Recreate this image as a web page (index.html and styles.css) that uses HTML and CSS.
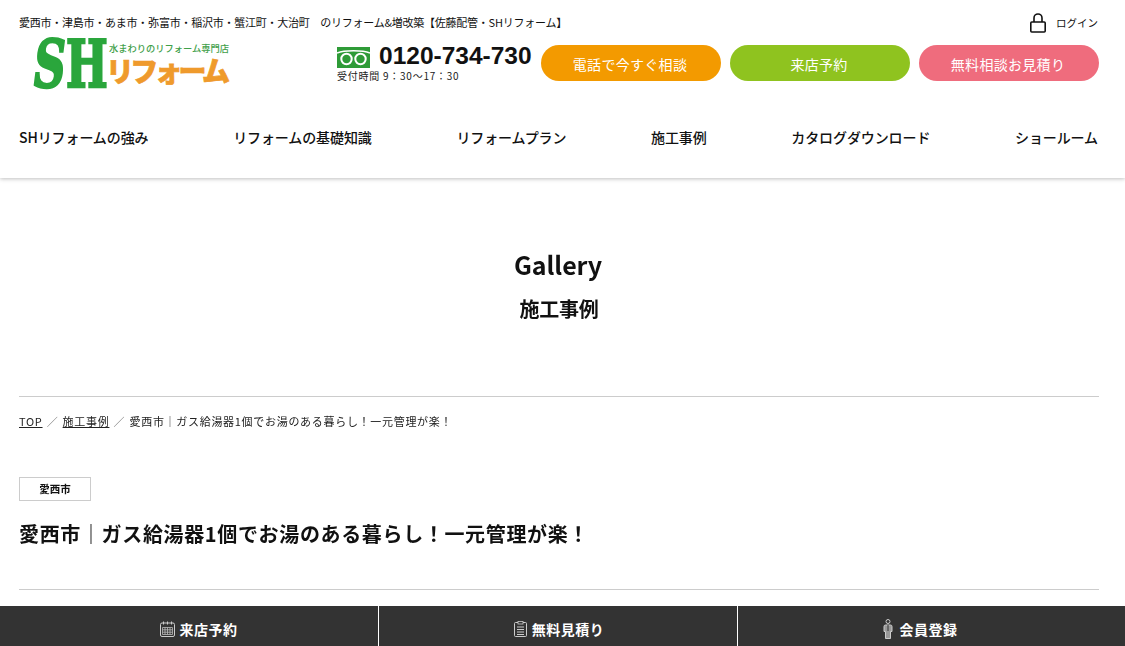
FILE: index.html
```html
<!DOCTYPE html>
<html lang="ja">
<head>
<meta charset="utf-8">
<title>施工事例</title>
<link rel="stylesheet" href="styles.css">
</head>
<body>
<header class="site-header">
  <div class="top-row">
    <p class="tagline">愛西市・津島市・あま市・弥富市・稲沢市・蟹江町・大治町　のリフォーム&amp;増改築【佐藤配管・SHリフォーム】</p>
    <a class="login">
      <svg class="lock" width="16" height="20" viewBox="0 0 16 20"><path d="M4 9V5a4 4 0 0 1 8 0V9" fill="none" stroke="#111" stroke-width="1.600"/><rect x="0.800" y="9" width="14.400" height="10" rx="1" fill="none" stroke="#111" stroke-width="1.600"/></svg>
      <span class="login-text">ログイン</span>
    </a>
  </div>
  <div class="main-row">
    <a class="logo">
      <span class="logo-sh"><span class="logo-s">S</span><span class="logo-h">H</span></span>
      <span class="logo-side">
        <span class="logo-sub">水まわりのリフォーム専門店</span>
        <span class="logo-name">リフォーム</span>
      </span>
    </a>
    <div class="contact">
      <div class="tel">
        <svg class="freedial" width="33" height="21" viewBox="0 0 33 21"><rect width="33" height="21" fill="#2e9b37"/><path d="M0 6C7 3 26 3 33 6" fill="none" stroke="#fff" stroke-width="1.600"/><circle cx="9.500" cy="12" r="5.200" fill="none" stroke="#fff" stroke-width="2"/><circle cx="23.500" cy="12" r="5.200" fill="none" stroke="#fff" stroke-width="2"/></svg>
        <span class="tel-num">0120-734-730</span>
      </div>
      <p class="hours">受付時間 9：30～17：30</p>
    </div>
    <div class="cta-list">
      <a class="cta cta-orange">電話で今すぐ相談</a>
      <a class="cta cta-green">来店予約</a>
      <a class="cta cta-pink">無料相談お見積り</a>
    </div>
  </div>
  <nav class="gnav">
    <a>SHリフォームの強み</a>
    <a>リフォームの基礎知識</a>
    <a>リフォームプラン</a>
    <a>施工事例</a>
    <a>カタログダウンロード</a>
    <a>ショールーム</a>
  </nav>
</header>
<main class="content">
  <div class="page-title">
    <h2 class="title-en">Gallery</h2>
    <p class="title-ja">施工事例</p>
  </div>
  <div class="crumbs">
    <a>TOP</a><span class="sep">／</span><a>施工事例</a><span class="sep">／</span><span>愛西市｜ガス給湯器1個でお湯のある暮らし！一元管理が楽！</span>
  </div>
  <span class="tag">愛西市</span>
  <h1 class="post-title">愛西市｜ガス給湯器1個でお湯のある暮らし！一元管理が楽！</h1>
  <hr class="post-rule">
</main>
<div class="fixed-bar">
  <a class="bar-item bar-first">
    <svg width="15" height="16" viewBox="0 0 15 16"><rect x="0.500" y="2" width="14" height="13.500" rx="1.500" fill="none" stroke="#ccc"/><path d="M3.500 0.500v3M7.500 0.500v3M11.500 0.500v3" stroke="#ccc"/><path d="M2.500 6.500h10v7h-10zM2.500 8.800h10M2.500 11.200h10M5 6.500v7M7.500 6.500v7M10 6.500v7" fill="none" stroke="#bbb" stroke-width="0.800"/></svg>
    <span>来店予約</span>
  </a>
  <a class="bar-item bar-mid">
    <svg width="13" height="16" viewBox="0 0 13 16"><rect x="0.500" y="1.500" width="12" height="14" rx="1" fill="none" stroke="#ccc"/><rect x="4" y="0.500" width="5" height="2.500" fill="#333" stroke="#ccc" stroke-width="0.800"/><path d="M3 6h7M3 8.500h7M3 11h7M3 13.500h7" stroke="#ccc"/></svg>
    <span>無料見積り</span>
  </a>
  <a class="bar-item bar-last">
    <svg width="10" height="20" viewBox="0 0 10 20"><circle cx="5" cy="2.500" r="2" fill="none" stroke="#ccc"/><path d="M1 7.500a1.500 1.500 0 0 1 1.500-1.500h5A1.500 1.500 0 0 1 9 7.500V12.500H7.500V19.500h-5V12.500H1z" fill="#999" stroke="#ccc"/><path d="M5 6v6" stroke="#333"/></svg>
    <span>会員登録</span>
  </a>
</div>
</body>
</html>
```
FILE: styles.css
```css
* { box-sizing: border-box; }
html, body { margin: 0; padding: 0; }
body {
  width: 1125px;
  height: 646px;
  overflow: hidden;
  background: #fff;
  color: #111;
  font-family: "Noto Sans CJK JP", "Noto Sans", sans-serif;
}
p, h1, h2 { margin: 0; }
.site-header {
  height: 178px;
  padding: 0 26px 0 19px;
  box-shadow: 0 1px 4px rgba(0, 0, 0, 0.25);
}
.top-row {
  height: 39px;
  padding-top: 11px;
  display: flex;
  justify-content: space-between;
  align-items: flex-start;
}
.tagline { font-size: 11px; line-height: 22px; letter-spacing: -0.240px; white-space: nowrap; }
.login {
  display: flex;
  align-items: center;
  gap: 10px;
  font-size: 10.500px;
  line-height: 20px;
  margin-right: 1px;
  margin-top: 1px;
}
.login-text { padding-top: 1px; }
.main-row {
  height: 50px;
  display: flex;
  align-items: flex-start;
}
.logo {
  width: 318px;
  padding-left: 15px;
  display: flex;
  align-items: flex-start;
}
.logo-sh {
  display: block;
  width: 75px;
  height: 50px;
  flex: none;
  font-family: "DejaVu Serif", serif;
  font-weight: 700;
  font-size: 65px;
  line-height: 50px;
  color: #2aa63c;
  white-space: nowrap;
  -webkit-text-stroke: 2.500px #2aa63c;
  transform: scaleX(0.680);
  transform-origin: left top;
}
.logo-s { font-style: italic; }
.logo-side { display: flex; flex-direction: column; }
.logo-sub {
  font-size: 9.250px;
  font-weight: 500;
  line-height: 12px;
  margin-top: 3px;
  color: #3fa04a;
  white-space: nowrap;
}
.logo-name {
  font-size: 28px;
  font-weight: 900;
  line-height: 28px;
  margin-top: 2px;
  margin-left: -3px;
  color: #ef9a2c;
  letter-spacing: -3.800px;
  white-space: nowrap;
  -webkit-text-stroke: 0.700px #ef9a2c;
}
.contact { width: 204px; margin-top: 5px; }
.tel { display: flex; align-items: center; gap: 9px; height: 26px; white-space: nowrap; }
.tel-num {
  font-family: "Liberation Sans", sans-serif;
  font-weight: 700;
  font-size: 24.500px;
  line-height: 26px;
  padding-bottom: 2px;
}
.hours { font-size: 10px; line-height: 16px; letter-spacing: 0.750px; margin-top: -2px; color: #222; }
.cta-list { display: flex; gap: 9px; margin-top: 6px; }
.cta {
  width: 180px;
  height: 36px;
  border-radius: 18px;
  color: #fff;
  font-size: 14px;
  line-height: 39px;
  padding-right: 2px;
  text-align: center;
  letter-spacing: 0.300px;
}
.cta-orange { background: #f39a00; }
.cta-green { background: #8fc31f; }
.cta-pink { background: #ef6c7d; }
.gnav {
  display: flex;
  justify-content: space-between;
  margin-top: 36px;
  padding-right: 1px;
  font-size: 14px;
  font-weight: 500;
  line-height: 24px;
  letter-spacing: -0.100px;
}
.content { padding: 0 26px 0 19px; will-change: transform; }
.page-title { text-align: center; padding-top: 67px; height: 218px; }
.title-en { font-size: 25px; font-weight: 600; line-height: 38px; letter-spacing: -0.050px; padding-right: 2px; }
.title-ja { font-size: 20px; font-weight: 700; line-height: 30px; margin-top: 11px; letter-spacing: -0.200px; }
.crumbs {
  border-top: 1px solid #ccc;
  padding-top: 15px;
  padding-bottom: 1px;
  font-size: 11px;
  line-height: 18px;
  letter-spacing: 0.700px;
  color: #222;
}
.crumbs a { text-decoration: underline; }
.sep { margin: 0 4.200px; color: #666; }
.tag {
  display: block;
  width: 72px;
  height: 24px;
  margin-top: 46px;
  border: 1px solid #ccc;
  text-align: center;
  font-size: 10.500px;
  font-weight: 700;
  line-height: 22px;
}
.post-title {
  font-size: 20px;
  font-weight: 700;
  line-height: 30px;
  margin-top: 18px;
  letter-spacing: 0.650px;
}
.post-rule {
  border: 0;
  border-top: 1px solid #ccc;
  margin: 40px 0 0;
}
.fixed-bar {
  position: fixed;
  left: 0;
  right: 0;
  bottom: 0;
  height: 40px;
  display: grid;
  grid-template-columns: 378px 359px 1fr;
  background: #333;
}
.bar-item {
  display: flex;
  align-items: center;
  justify-content: center;
  gap: 5px;
  color: #fff;
  font-size: 14px;
  font-weight: 600;
  letter-spacing: 0.500px;
  padding-top: 5px;
  border-left: 1px solid #fff;
}
.bar-first { border-left: 0; padding-left: 19px; }
.bar-mid { padding-left: 2px; }
.bar-last { padding-right: 23px; gap: 7px; }
```
